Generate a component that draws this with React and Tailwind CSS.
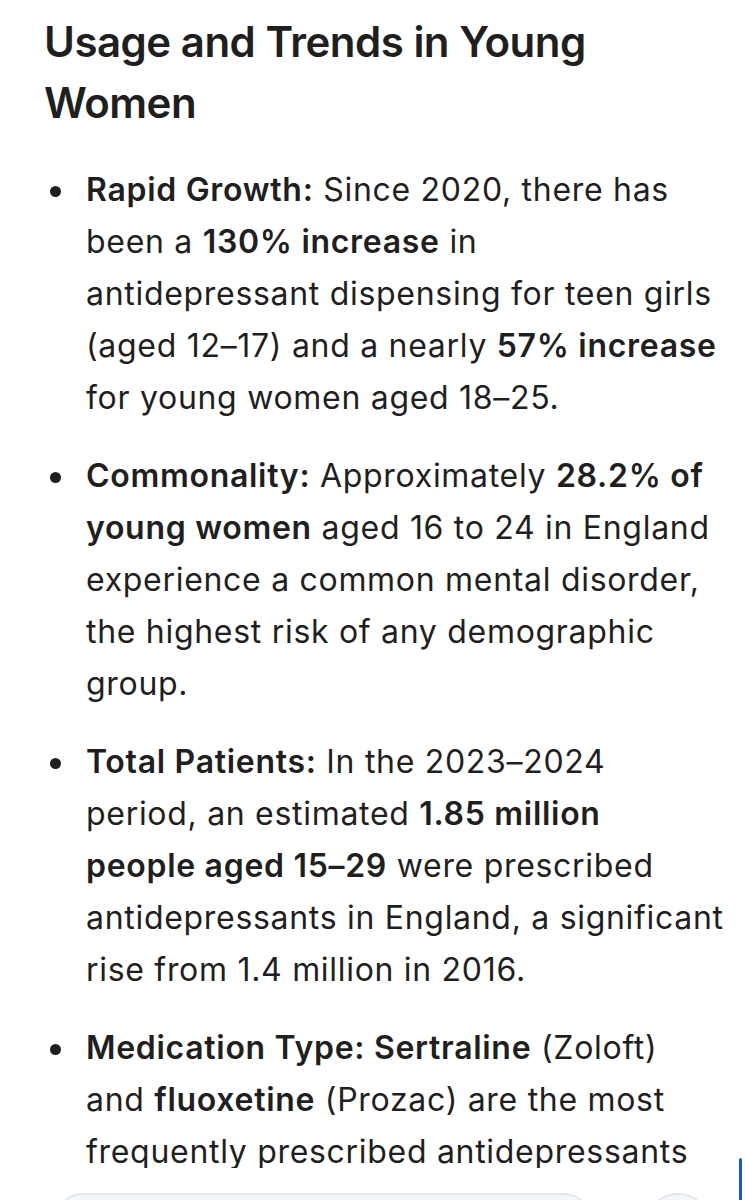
import React from "react";

const items = [
  [
    <><b className="font-semibold">Rapid Growth:</b> Since 2020, there has</>,
    <>been a <b className="font-semibold">130% increase</b> in</>,
    <>antidepressant dispensing for teen girls</>,
    <>(aged 12–17) and a nearly <b className="font-semibold">57% increase</b></>,
    <>for young women aged 18–25.</>,
  ],
  [
    <><b className="font-semibold">Commonality:</b> Approximately <b className="font-semibold">28.2% of</b></>,
    <><b className="font-semibold">young women</b> aged 16 to 24 in England</>,
    <>experience a common mental disorder,</>,
    <>the highest risk of any demographic</>,
    <>group.</>,
  ],
  [
    <><b className="font-semibold">Total Patients:</b> In the 2023–2024</>,
    <>period, an estimated <b className="font-semibold">1.85 million</b></>,
    <><b className="font-semibold">people aged 15–29</b> were prescribed</>,
    <>antidepressants in England, a significant</>,
    <>rise from 1.4 million in 2016.</>,
  ],
  [
    <><b className="font-semibold">Medication Type: Sertraline</b> (Zoloft)</>,
    <>and <b className="font-semibold">fluoxetine</b> (Prozac) are the most</>,
    <>frequently prescribed antidepressants</>,
  ],
];

export default function App() {
  return (
    <div
      className="relative w-[745px] h-[1200px] overflow-hidden bg-white text-[#1f1f1f]"
      style={{ fontFamily: "Inter, 'Noto Sans', sans-serif" }}
    >
      <div className="pl-[44px] pr-[16px] pt-[11px]">
        <h2 className="text-[42px] leading-[61px] font-semibold tracking-[-0.5px] w-[560px]">
          Usage and Trends in Young Women
        </h2>
        <ul className="mt-[31px] flex flex-col gap-[26px]">
          {items.map((lines, i) => (
            <li key={i} className="flex">
              <span className="w-[42px] shrink-0 pl-[6px] pt-[22px]">
                <span className="block w-[11px] h-[11px] rounded-full bg-[#1f1f1f]" />
              </span>
              <p className="text-[32px] leading-[52px] tracking-[0.7px] whitespace-nowrap">
                {lines.map((l, j) => (
                  <React.Fragment key={j}>
                    {l}
                    {j < lines.length - 1 && <br />}
                  </React.Fragment>
                ))}
              </p>
            </li>
          ))}
        </ul>
      </div>

      <div className="absolute left-0 right-0 bottom-0 h-[32px] bg-white">
        <div className="absolute left-[53px] top-[25px] w-[540px] h-[60px] rounded-full border-2 border-[#e3e7ec] bg-[#f3f6fa]" />
        <div className="absolute left-[645px] top-[25px] w-[66px] h-[66px] rounded-full border-2 border-[#e3e7ec] bg-[#f3f6fa]" />
        <div className="absolute left-[739px] top-[-10px] w-[3px] h-[50px] bg-[#1a56d6] rounded-t-sm" />
      </div>
    </div>
  );
}
